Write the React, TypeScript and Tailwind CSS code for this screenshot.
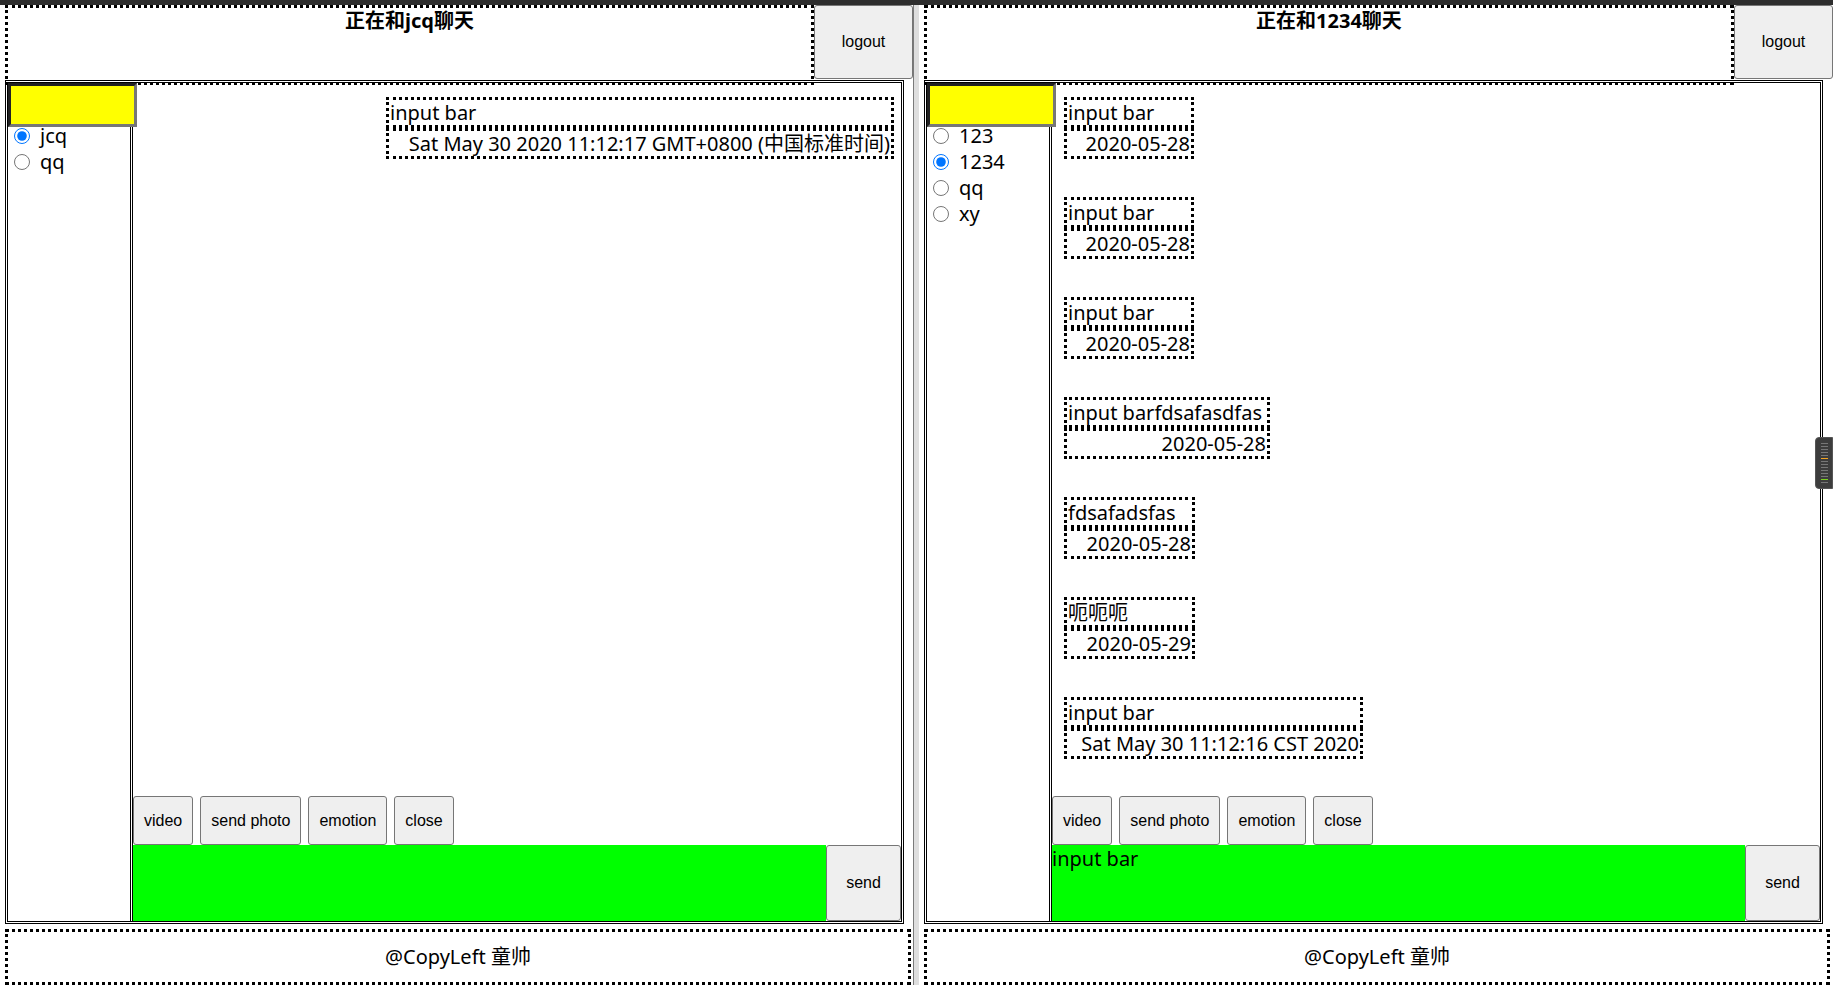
import React from 'react';
import clsx from 'clsx';

type Msg = { text: string; date: string; w: string };

type PanelProps = {
    title: string;
    users: string[];
    active: string;
    messages: Msg[];
    mine?: boolean;
    draft?: string;
};

const btn =
    "rounded-[3px] border border-[#767676] bg-[#efefef] px-[10px] font-['Liberation_Sans',Arial,sans-serif] text-[16px] text-black";

const dotted = 'border-[3px] border-dotted border-black';

const leftMsgs: Msg[] = [
    { text: 'input bar', date: 'Sat May 30 2020 11:12:17 GMT+0800 (中国标准时间)', w: 'w-[508px]' },
];

const rightMsgs: Msg[] = [
    { text: 'input bar', date: '2020-05-28', w: 'w-[130px]' },
    { text: 'input bar', date: '2020-05-28', w: 'w-[130px]' },
    { text: 'input bar', date: '2020-05-28', w: 'w-[130px]' },
    { text: 'input barfdsafasdfas', date: '2020-05-28', w: 'w-[206px]' },
    { text: 'fdsafadsfas', date: '2020-05-28', w: 'w-[131px]' },
    { text: '呃呃呃', date: '2020-05-29', w: 'w-[131px]' },
    { text: 'input bar', date: 'Sat May 30 11:12:16 CST 2020', w: 'w-[299px]' },
];

function Message({ m }: { m: Msg }) {
    return (
        <div className={clsx(m.w, 'shrink-0 whitespace-nowrap text-[20px] leading-[25px]')}>
            <div className={clsx(dotted, 'pl-px')}>{m.text}</div>
            <div className={clsx(dotted, 'pr-px text-right')}>{m.date}</div>
        </div>
    );
}

function ChatPanel({ title, users, active, messages, mine, draft }: PanelProps) {
    return (
        <div className="flex h-full flex-col pl-[5px]">
            {/* Header */}
            <div className="flex">
                <div className={clsx(dotted, 'h-[80px] flex-1 text-center text-[20px] font-bold leading-[26px]')}>
                    {title}
                </div>
                <button className={clsx(btn, 'h-[74px] w-[99px] shrink-0')}>logout</button>
            </div>

            {/* Main */}
            <div className="-mt-[5px] flex h-[844px] w-[899px] border-[3px] border-double border-black">
                {/* user list */}
                <div className="flex w-[125px] shrink-0 flex-col border-r-[3px] border-double border-black">
                    <div className="relative z-10 h-[44px] w-[129px] shrink-0 border-[3px] border-t-[#222] border-l-[#222] border-r-[#777] border-b-[#777] bg-[#ffff00]" />
                    <div className="-mt-[4px] flex flex-col">
                        {users.map((u) => (
                            <label key={u} className="flex h-[26px] items-center gap-[10px] pl-[6px] text-[20px]">
                                <input type="radio" readOnly checked={u === active} className="m-0 h-4 w-4 accent-[#0075ff]" />
                                <span>{u}</span>
                            </label>
                        ))}
                    </div>
                </div>

                {/* chat */}
                <div className="flex min-w-0 flex-1 flex-col">
                    <div
                        className={clsx(
                            'flex min-h-0 flex-1 flex-col gap-[38px] overflow-hidden pt-[14px]',
                            mine ? 'items-end pr-[7px]' : 'items-start pl-[12px]'
                        )}
                    >
                        {messages.map((m, i) => (
                            <Message key={i} m={m} />
                        ))}
                    </div>
                    <div className="flex h-[49px] shrink-0 gap-[7px]">
                        <button className={btn}>video</button>
                        <button className={btn}>send photo</button>
                        <button className={btn}>emotion</button>
                        <button className={btn}>close</button>
                    </div>
                    <div className="flex h-[76px] shrink-0">
                        <div className="flex-1 bg-[#00ff00] text-[20px] leading-[27px]">{draft}</div>
                        <button className={clsx(btn, 'w-[75px]')}>send</button>
                    </div>
                </div>
            </div>

            {/* Footer */}
            <div className={clsx(dotted, 'mt-[5px] flex h-[56px] w-[906px] items-center justify-center text-[20px]')}>
                @CopyLeft 童帅
            </div>
        </div>
    );
}

export default function App() {
    const ticks = Array.from({ length: 14 });

    return (
        <div className="relative h-[985px] w-[1833px] overflow-hidden bg-white font-['Noto_Sans','Noto_Sans_CJK_SC',sans-serif] text-black">
            <div className="h-[5px] bg-[#2d2d2d]" />
            <div className="flex h-[980px]">
                <div className="w-[913px] shrink-0">
                    <ChatPanel title="正在和jcq聊天" users={['jcq', 'qq']} active="jcq" messages={leftMsgs} mine />
                </div>
                <div className="w-[6px] shrink-0 border-l border-[#7a7a7a] bg-[#dedede]" />
                <div className="flex-1">
                    <ChatPanel
                        title="正在和1234聊天"
                        users={['123', '1234', 'qq', 'xy']}
                        active="1234"
                        messages={rightMsgs}
                        draft="input bar"
                    />
                </div>
            </div>

            {/* screen widget on the right edge */}
            <div className="absolute right-0 top-[437px] flex h-[52px] w-[18px] flex-col items-center justify-center gap-[2px] rounded-l-[4px] border border-[#555] bg-[#3d3d3d]">
                {ticks.map((_, i) => (
                    <div
                        key={i}
                        className={clsx(
                            'h-px w-[7px]',
                            i === 5 ? 'bg-[#f5a623]' : i === 12 ? 'bg-[#7ed321]' : 'bg-[#777]'
                        )}
                    />
                ))}
            </div>
        </div>
    );
}
